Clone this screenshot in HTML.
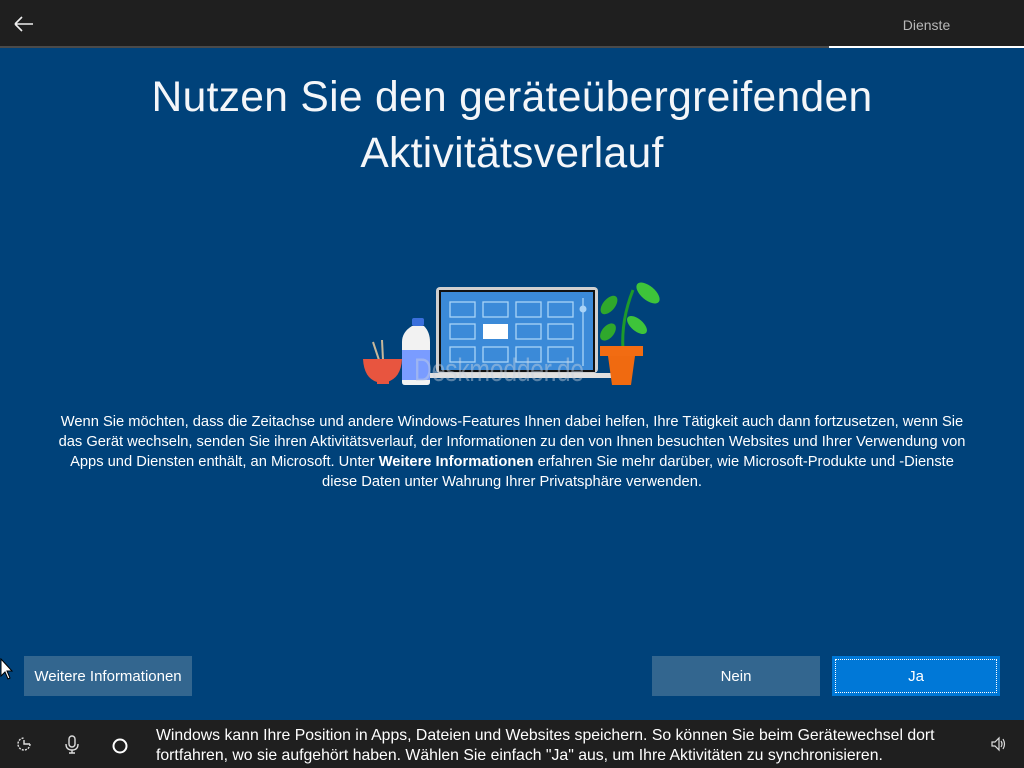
<!DOCTYPE html>
<html><head><meta charset="utf-8"><style>
html,body{margin:0;padding:0;width:1024px;height:768px;overflow:hidden;background:#00427a;font-family:"Liberation Sans",sans-serif;color:#fff;position:relative}
.top{position:absolute;left:0;top:0;width:1024px;height:46px;background:#1f1f1f}
.prog{position:absolute;left:0;top:46px;width:829px;height:2px;background:#4a4a4a}
.prog2{position:absolute;left:829px;top:46px;width:195px;height:2px;background:#fff}
.dien{position:absolute;left:829px;width:195px;top:17px;text-align:center;font-size:14px;color:#b8b8b8}
h1{position:absolute;top:69px;left:0;width:1024px;margin:0;text-align:center;font-weight:300;font-size:42.6px;line-height:56px;letter-spacing:0.3px;color:#f4f6f9}
.p{position:absolute;top:412px;left:52px;width:920px;text-align:center;font-size:14.7px;line-height:20px}
.btn{position:absolute;top:656px;height:40px;line-height:42px;text-align:center;font-size:15px}
.bot{position:absolute;left:0;top:720px;width:1024px;height:48px;background:#1f1f1f}
.bt{position:absolute;left:156px;top:726px;font-size:15.8px;line-height:20px;color:#fff}
.wm{position:absolute;left:414px;top:352px;font-size:32px;color:rgba(200,210,225,0.45);transform:scaleX(0.78);transform-origin:left;letter-spacing:-0.5px}
</style></head><body>
<div class="top"></div><div class="prog"></div><div class="prog2"></div>
<svg style="position:absolute;left:12px;top:14px" width="24" height="20" viewBox="0 0 24 20"><path d="M3 10H21M3 10L10 3M3 10L10 17" stroke="#eee" stroke-width="1.6" fill="none"/></svg>
<div class="dien">Dienste</div>
<h1>Nutzen Sie den geräteübergreifenden<br>Aktivitätsverlauf</h1>
<svg style="position:absolute;left:355px;top:270px" width="320" height="130" viewBox="0 0 320 130">
<line x1="18" y1="72" x2="24" y2="90" stroke="#c8b89a" stroke-width="2"/><line x1="27" y1="70" x2="28" y2="90" stroke="#c8b89a" stroke-width="2"/>
<path d="M8 89H47Q46 108 32 112H22Q9 108 8 89Z" fill="#e8553f"/><rect x="22" y="110" width="12" height="4" fill="#e8553f"/>
<rect x="57" y="48" width="12" height="8" rx="2" fill="#3a6fdc"/>
<path d="M57 56H69Q75 62 75 72V112Q75 115 72 115H50Q47 115 47 112V72Q47 62 57 56Z" fill="#f2f2f2"/>
<rect x="47" y="80" width="28" height="30" fill="#7a9cff"/>
<rect x="81" y="17" width="162" height="86" rx="4" fill="#d0d0d0"/>
<rect x="84" y="20" width="156" height="82" fill="#111"/>
<rect x="86" y="22" width="152" height="78" fill="#3b8ad8"/>
<g fill="none" stroke="#a9d3f7" stroke-width="1.3">
<rect x="95" y="32" width="25" height="15"/><rect x="128" y="32" width="25" height="15"/><rect x="161" y="32" width="25" height="15"/><rect x="193" y="32" width="25" height="15"/>
<rect x="95" y="54" width="25" height="15"/><rect x="161" y="54" width="25" height="15"/><rect x="193" y="54" width="25" height="15"/>
<rect x="95" y="77" width="25" height="15"/><rect x="128" y="77" width="25" height="15"/><rect x="161" y="77" width="25" height="15"/><rect x="193" y="77" width="25" height="15"/>
<line x1="228" y1="28" x2="228" y2="96"/></g>
<rect x="128" y="54" width="25" height="15" fill="#fff"/><circle cx="228" cy="39" r="3.5" fill="#a9d3f7"/>
<rect x="75" y="103" width="186" height="5" fill="#e0e0e0"/>
<path d="M268 80Q266 50 278 20" stroke="#1d9a2a" stroke-width="3" fill="none"/>
<ellipse cx="293" cy="23" rx="14" ry="7" transform="rotate(40 293 23)" fill="#3ec43a"/>
<ellipse cx="282" cy="55" rx="12" ry="6" transform="rotate(40 282 55)" fill="#3ec43a"/>
<ellipse cx="254" cy="35" rx="11" ry="6" transform="rotate(-50 254 35)" fill="#2fa82c"/>
<ellipse cx="253" cy="62" rx="10" ry="6" transform="rotate(-50 253 62)" fill="#2fa82c"/>
<path d="M245 76H288L284 86H280L276 115H257L253 86H249Z" fill="#f06a10"/><rect x="245" y="76" width="43" height="10" fill="#f26c12"/>
</svg>
<div class="wm">Deskmodder.de</div>
<div class="p">Wenn Sie möchten, dass die Zeitachse und andere Windows-Features Ihnen dabei helfen, Ihre Tätigkeit auch dann fortzusetzen, wenn Sie das Gerät wechseln, senden Sie ihren Aktivitätsverlauf, der Informationen zu den von Ihnen besuchten Websites und Ihrer Verwendung von Apps und Diensten enthält, an Microsoft. Unter <b>Weitere Informationen</b> erfahren Sie mehr darüber, wie Microsoft-Produkte und -Dienste diese Daten unter Wahrung Ihrer Privatsphäre verwenden.</div>
<svg style="position:absolute;left:0;top:658px" width="14" height="22" viewBox="0 0 14 22"><path d="M1 1V18L5 14L8 21L10 20L7 13H12Z" fill="#fff" stroke="#000" stroke-width="1"/></svg>
<div class="btn" style="left:24px;width:168px;background:#33668f">Weitere Informationen</div>
<div class="btn" style="left:652px;width:168px;background:#33668f">Nein</div>
<div class="btn" style="left:832px;width:168px;background:#0078d7"><div style="position:absolute;left:3px;top:3px;right:3px;bottom:3px;border:1px dotted #fff"></div>Ja</div>
<div class="bot"></div>
<svg style="position:absolute;left:14px;top:734px" width="20" height="20" viewBox="0 0 20 20"><path d="M16 10A6 6 0 1 1 10 4" stroke="#ddd" stroke-width="1.4" fill="none" stroke-dasharray="2 1.2"/><path d="M10 6V10H16" stroke="#ddd" stroke-width="1.4" fill="none"/></svg>
<svg style="position:absolute;left:62px;top:734px" width="20" height="22" viewBox="0 0 20 22"><rect x="7" y="2" width="6" height="11" rx="3" stroke="#ddd" stroke-width="1.4" fill="none"/><path d="M4 10Q4 16 10 16Q16 16 16 10M10 16V19M7 19H13" stroke="#ddd" stroke-width="1.4" fill="none"/></svg>
<svg style="position:absolute;left:110px;top:736px" width="20" height="20" viewBox="0 0 20 20"><circle cx="10" cy="10" r="6.5" stroke="#fff" stroke-width="2" fill="none"/></svg>
<div class="bt">Windows kann Ihre Position in Apps, Dateien und Websites speichern. So können Sie beim Gerätewechsel dort<br>fortfahren, wo sie aufgehört haben. Wählen Sie einfach "Ja" aus, um Ihre Aktivitäten zu synchronisieren.</div>
<svg style="position:absolute;left:990px;top:736px" width="18" height="16" viewBox="0 0 18 16"><path d="M2 6H5L9 2V14L5 10H2Z" stroke="#ddd" stroke-width="1.2" fill="none"/><path d="M11 5Q13 8 11 11M13 3Q16 8 13 13" stroke="#ddd" stroke-width="1.2" fill="none"/></svg>
</body></html>
